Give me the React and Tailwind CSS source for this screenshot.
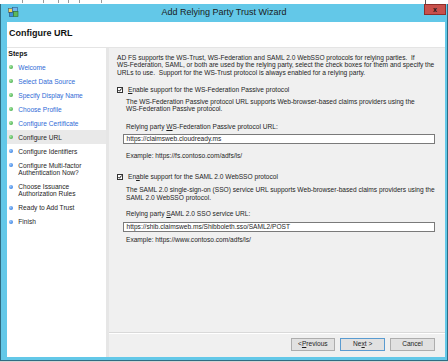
import React from 'react';

const steps = [
    { lines: ['Welcome'], state: 'done' },
    { lines: ['Select Data Source'], state: 'done' },
    { lines: ['Specify Display Name'], state: 'done' },
    { lines: ['Choose Profile'], state: 'done' },
    { lines: ['Configure Certificate'], state: 'done' },
    { lines: ['Configure URL'], state: 'current' },
    { lines: ['Configure Identifiers'], state: 'todo' },
    { lines: ['Configure Multi-factor', 'Authentication Now?'], state: 'todo' },
    { lines: ['Choose Issuance', 'Authorization Rules'], state: 'todo' },
    { lines: ['Ready to Add Trust'], state: 'todo' },
    { lines: ['Finish'], state: 'todo' },
];

const CheckBox = () => (
    <svg width="6" height="6" viewBox="0 0 6 6" className="shrink-0">
        <rect x="0.5" y="0.5" width="5" height="5" fill="#fff" stroke="#333" />
        <path d="M1.4 3 L2.5 4.2 L4.6 1.5" stroke="#111" strokeWidth="1" fill="none" />
    </svg>
);

const WizardIcon = () => (
    <svg width="11" height="11" viewBox="0 0 11 11">
        <rect x="0.5" y="1.5" width="4" height="4" fill="#f3d35a" stroke="#4a5a6a" strokeWidth="0.6" />
        <rect x="4.5" y="0.5" width="5" height="4" fill="#6fb6ee" stroke="#2d5d8a" strokeWidth="0.6" />
        <rect x="1.5" y="5.5" width="4" height="4" fill="#3e8fd8" stroke="#234f7a" strokeWidth="0.6" />
        <rect x="5.5" y="4.5" width="4.5" height="5" fill="#5cb85c" stroke="#2f6b2f" strokeWidth="0.6" />
    </svg>
);

const Button = ({ children, primary }) => (
    <div
        className={`w-[44.5px] h-[12.5px] flex items-center justify-center bg-[#e1e1e1] border ${
            primary ? 'border-[#5a9bd0]' : 'border-[#adadad]'
        } text-[6.6px] text-[#1e1e1e]`}
    >
        {children}
    </div>
);

export default function App() {
    return (
        <div className="w-[448px] h-[362px] bg-white overflow-hidden flex flex-col font-['Liberation_Sans',Arial,sans-serif] text-[6.6px] text-[#1e1e1e]">
            {/* strip of whatever sits behind the window */}
            <div className="h-[4px] shrink-0 flex">
                <div className="ml-[22px] w-px h-[3px] bg-[#9a9a9a]" />
                <div className="ml-[20px] w-px h-[3px] bg-[#9a9a9a]" />
                <div className="ml-[14px] w-px h-[3px] bg-[#9a9a9a]" />
                <div className="ml-[9px] w-px h-[3px] bg-[#9a9a9a]" />
                <div className="ml-[10px] w-px h-[3px] bg-[#9a9a9a]" />
                <div className="ml-[21px] w-px h-[3px] bg-[#9a9a9a]" />
                <div className="ml-[323px] w-px h-[4px] bg-[#555]" />
            </div>

            {/* window */}
            <div className="h-[357px] shrink-0 border-x border-b border-[#2f6c82] bg-[#63c8e8] flex flex-col">
                {/* title bar */}
                <div className="h-[18px] shrink-0 grid grid-cols-[1fr_auto_1fr] items-start">
                    <div className="pl-[7px] pt-[3px]">
                        <WizardIcon />
                    </div>
                    <div className="text-[9px] leading-[17px] text-[#1b1b1b]">Add Relying Party Trust Wizard</div>
                    <div className="flex justify-end pr-[1px]">
                        <div className="w-[22px] h-[11px] bg-[#c8504b] border border-[#8d2e2a] flex items-center justify-center text-[7px] font-bold leading-none text-[#1a1a1a]">
                            x
                        </div>
                    </div>
                </div>

                {/* client */}
                <div className="flex-1 flex pl-[6px] pr-[4px] pb-[3px]">
                    <div className="flex-1 bg-white flex flex-col">
                        <div className="h-[26px] shrink-0 flex items-center pb-[2px] pl-[2px] border-b border-[#e4e4e4]">
                            <span className="text-[9px] font-bold text-[#111]">Configure URL</span>
                        </div>

                        <div className="flex-1 flex">
                            {/* steps */}
                            <div className="w-[99px] shrink-0 bg-white">
                                <div className="pl-[1.3px] font-bold text-[7px] leading-[11px] text-[#111]">Steps</div>
                                <div className="mt-[1.3px] flex flex-col">
                                    {steps.map((s) => (
                                        <div
                                            key={s.lines[0]}
                                            className={`flex items-start py-[3.3px] pl-[2px] ${
                                                s.state === 'current' ? 'bg-[#e9e9e9]' : ''
                                            }`}
                                        >
                                            <div
                                                className={`mt-[1.8px] w-[4px] h-[4px] rounded-full shrink-0 ${
                                                    s.state === 'todo'
                                                        ? 'bg-[radial-gradient(circle_at_35%_35%,#9cc8ff,#1f6fd8)]'
                                                        : 'bg-[radial-gradient(circle_at_35%_35%,#a6e8a0,#2f9e3a)]'
                                                }`}
                                            />
                                            <div
                                                className={`ml-[5.3px] leading-[7.4px] ${
                                                    s.state === 'done' ? 'text-[#2f6bd6]' : 'text-[#1e1e1e]'
                                                }`}
                                            >
                                                {s.lines.map((l) => (
                                                    <div key={l}>{l}</div>
                                                ))}
                                            </div>
                                        </div>
                                    ))}
                                </div>
                            </div>

                            <div className="w-[3px] shrink-0 bg-[#e6e6e6]" />

                            {/* content */}
                            <div className="flex-1 min-w-0 bg-[#f0f0f0] flex flex-col">
                                <div className="flex-1 pl-[8px] pr-[10px] pt-[5.8px] leading-[7.4px] whitespace-nowrap">
                                    <p>
                                        AD FS supports the WS-Trust, WS-Federation and SAML 2.0 WebSSO protocols for relying parties.&nbsp; If
                                        <br />
                                        WS-Federation, SAML, or both are used by the relying party, select the check boxes for them and specify the
                                        <br />
                                        URLs to use.&nbsp; Support for the WS-Trust protocol is always enabled for a relying party.
                                    </p>

                                    <div className="mt-[10px] flex items-center gap-[5px]">
                                        <CheckBox />
                                        <span>
                                            <u>E</u>nable support for the WS-Federation Passive protocol
                                        </span>
                                    </div>

                                    <div className="pl-[5.6px]">
                                        <p className="pl-[3.4px] mt-[4.2px]">
                                            The WS-Federation Passive protocol URL supports Web-browser-based claims providers using the
                                            <br />
                                            WS-Federation Passive protocol.
                                        </p>
                                        <p className="pl-[3.4px] mt-[10.2px]">
                                            Relying party <u>W</u>S-Federation Passive protocol URL:
                                        </p>
                                        <div className="mt-[4px] h-[10px] bg-white border border-[#7a7a7a] flex items-center pl-[3px]">
                                            https://claimsweb.cloudready.ms
                                        </div>
                                        <p className="pl-[3.4px] mt-[8px]">Example: https://fs.contoso.com/adfs/ls/</p>
                                    </div>

                                    <div className="mt-[13.6px] flex items-center gap-[5px]">
                                        <CheckBox />
                                        <span>
                                            En<u>a</u>ble support for the SAML 2.0 WebSSO protocol
                                        </span>
                                    </div>

                                    <div className="pl-[5.6px]">
                                        <p className="pl-[3.4px] mt-[5.9px]">
                                            The SAML 2.0 single-sign-on (SSO) service URL supports Web-browser-based claims providers using the
                                            <br />
                                            SAML 2.0 WebSSO protocol.
                                        </p>
                                        <p className="pl-[3.4px] mt-[9.2px]">
                                            Relying party <u>S</u>AML 2.0 SSO service URL:
                                        </p>
                                        <div className="mt-[4px] h-[10px] bg-white border border-[#7a7a7a] flex items-center pl-[3px]">
                                            https://shib.claimsweb.ms/Shibboleth.sso/SAML2/POST
                                        </div>
                                        <p className="pl-[3.4px] mt-[4.6px]">Example: https://www.contoso.com/adfs/ls/</p>
                                    </div>
                                </div>

                                {/* footer */}
                                <div className="shrink-0 border-t border-[#d9d9d9]">
                                    <div className="border-t border-white pt-[4px] pb-[6.5px] pr-[10px] flex justify-end gap-[5.3px]">
                                        <Button>
                                            &lt; <u>P</u>revious
                                        </Button>
                                        <Button primary>
                                            Ne<u>x</u>t &gt;
                                        </Button>
                                        <Button>Cancel</Button>
                                    </div>
                                </div>
                            </div>
                        </div>
                    </div>
                </div>
            </div>
            <div className="h-px shrink-0 bg-[#d4d4d4]" />
        </div>
    );
}
